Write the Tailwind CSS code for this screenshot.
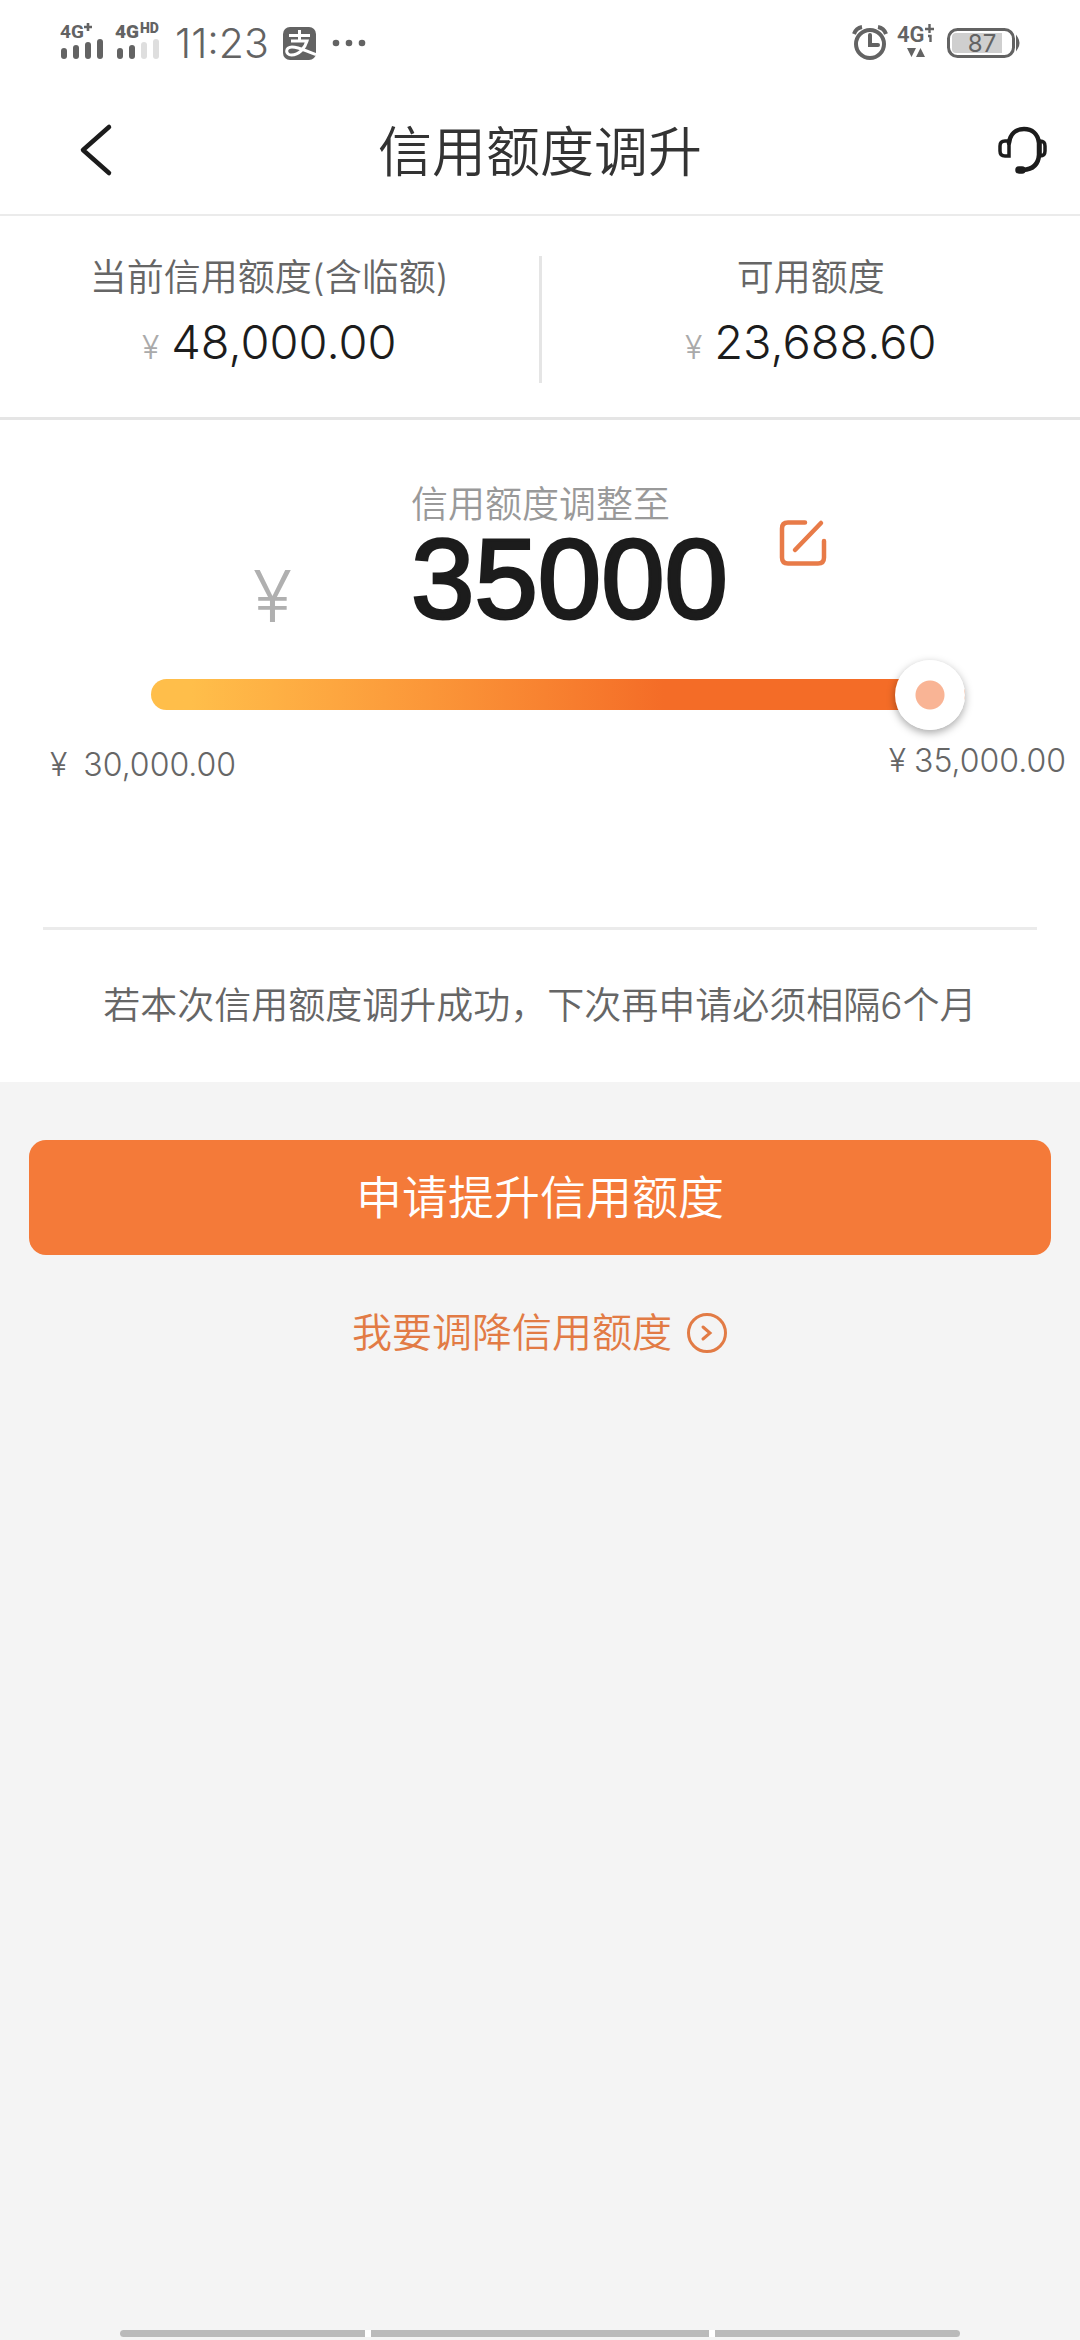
<!DOCTYPE html>
<html lang="zh-CN">
<head>
  <meta charset="UTF-8" />
  <meta name="viewport" content="width=device-width, initial-scale=1.0"/>
  <title>信用额度调升</title>
  <script src="https://cdn.jsdelivr.net/npm/@tailwindcss/browser@4"></script>
</head>
<body class="min-h-screen flex flex-col bg-[#f4f4f4] font-[Inter,'Noto_Sans_CJK_SC',sans-serif] font-[350] text-[#666]">

  <!-- Status bar -->
  <div class="h-[84px] bg-white flex items-center justify-between px-[60px] pt-[2px] text-[#636363]">
    <div class="flex items-center">
      <svg class="w-[44px] h-[48px]" viewBox="0 -5 44 48" fill="#636363" font-family="Roboto, sans-serif" font-weight="700">
        <text x="0" y="14" font-size="19">4G</text>
        <path d="M24 3h8M28 -1v8" stroke="#636363" stroke-width="2.6"/>
        <rect x="1" y="24" width="6" height="11" rx="3"/>
        <rect x="13" y="21" width="6" height="14" rx="3"/>
        <rect x="25" y="18" width="6" height="17" rx="3"/>
        <rect x="37" y="15" width="6" height="20" rx="3"/>
      </svg>
      <svg class="w-[48px] h-[48px] ml-[11px]" viewBox="0 -5 48 48" fill="#636363" font-family="Roboto, sans-serif" font-weight="900">
        <text x="0" y="14" font-size="19">4G</text>
        <text x="25" y="9" font-size="14">HD</text>
        <rect x="2" y="24" width="6" height="11" rx="3"/>
        <rect x="14" y="21" width="6" height="14" rx="3"/>
        <rect x="26" y="18" width="6" height="17" rx="3" fill="#dedede"/>
        <rect x="38" y="15" width="6" height="20" rx="3" fill="#dedede"/>
      </svg>
      <span class="ml-3 text-[41px] leading-[48px]">11:23</span>
      <svg class="w-[33px] h-[33px] ml-[14px]" viewBox="0 0 33 33">
        <rect width="33" height="33" rx="7" fill="#636363"/>
        <path d="M6 8.500h21M16.500 3v11M8 14h16C22 21 16 28 8.500 28C2 28 2 20 9 20C17 20 24 25 33 27.500" fill="none" stroke="#fff" stroke-width="3"/>
      </svg>
      <svg class="w-[34px] h-[8px] ml-4" viewBox="0 0 34 8" fill="#636363">
        <circle cx="4" cy="4" r="3.300"/><circle cx="17" cy="4" r="3.300"/><circle cx="30" cy="4" r="3.300"/>
      </svg>
    </div>
    <div class="flex items-center">
      <svg class="w-[36px] h-[36px]" viewBox="0 0 36 36" fill="none" stroke="#636363" stroke-width="4">
        <circle cx="18" cy="19" r="14"/>
        <path d="M18 10v10h8" stroke-linecap="round"/>
        <path d="M2 9Q4 3 10 2M34 9Q32 3 26 2"/>
      </svg>
      <svg class="w-[38px] h-[48px] ml-[9px]" viewBox="0 -4 38 48" fill="#636363" font-family="Roboto, sans-serif" font-weight="600">
        <text x="0" y="19" font-size="22">4G</text>
        <path d="M28 6h9M32.500 1v9M31 13h2.500v6" fill="none" stroke="#636363" stroke-width="2.400"/>
        <path d="M10 25h9l-4.500 9zM19 34h9l-4.500-9z"/>
      </svg>
      <svg class="w-[73px] h-[32px] ml-[12px]" viewBox="0 0 73 32" font-family="Inter, sans-serif">
        <rect x="1.500" y="2.500" width="65" height="27" rx="9" fill="none" stroke="#636363" stroke-width="3"/>
        <path d="M70 11q3 5 0 10z" fill="#636363" stroke="#636363" stroke-width="2"/>
        <path d="M9 6h46v20H9q-4 0-4-4V10q0-4 4-4z" fill="#cfcfcf"/>
        <text x="35" y="24.500" font-size="24" font-weight="400" fill="#636363" text-anchor="middle">87</text>
      </svg>
    </div>
  </div>

  <!-- Header -->
  <header class="h-[132px] bg-white border-b-2 border-[#ebebeb] grid grid-cols-[1fr_auto_1fr] items-center pl-[76px] pr-[30px] pt-[2px]">
    <button type="button" aria-label="返回" class="justify-self-start">
      <svg class="w-[40px] h-[54px]" viewBox="0 0 40 54" fill="none" stroke="#1c1c1c" stroke-width="4.500" stroke-linecap="round" stroke-linejoin="round">
        <path d="M33 4L7 27L33 50"/>
      </svg>
    </button>
    <h1 class="text-[54px] leading-[80px] text-[#333] pt-[6px] pr-[46px]">信用额度调升</h1>
    <button type="button" aria-label="客服" class="justify-self-end">
      <svg class="w-[54px] h-[50px]" viewBox="0 0 54 50" fill="none" stroke="#1c1c1c" stroke-width="4.500" stroke-linecap="round">
        <path d="M13 18C14 9 20 4 28 4S42 9 43 18V30Q42 44 27 45"/>
        <path d="M13 16v15H9q-5 0-5-5v-5q0-5 5-5z" stroke-width="3.500"/>
        <path d="M44 16q5 0 5 5v5q0 5-5 5z" stroke-width="3.500"/>
        <path d="M23 45h3" stroke-width="7.500"/>
      </svg>
    </button>
  </header>

  <!-- Current and available limit -->
  <section class="bg-white border-b-3 border-[#e5e5e5] pt-10 pb-[34px] flex">
    <div class="flex-1 border-r-3 border-[#e5e5e5] h-[127px] text-center">
      <p class="text-[37px] leading-[44px]">当前信用额度(含临额)</p>
      <p class="mt-[14px] text-[47px] leading-[56px] font-light text-[#1c1c1c] flex items-baseline justify-center gap-3"><span class="text-[32px] leading-[40px] text-[#aaa]">¥</span>48,000.00</p>
    </div>
    <div class="flex-1 text-center">
      <p class="text-[37px] leading-[44px]">可用额度</p>
      <p class="mt-[14px] text-[47px] leading-[56px] font-light text-[#1c1c1c] flex items-baseline justify-center gap-3"><span class="text-[32px] leading-[40px] text-[#aaa]">¥</span>23,688.60</p>
    </div>
  </section>

  <!-- Adjustment -->
  <section class="bg-white pt-[63px]">
    <div class="flex justify-center">
      <span class="w-[158px] pt-[73px] text-[72px] leading-[80px] font-light text-[#b0b0b0]">¥</span>
      <div>
        <label for="amount" class="block text-[37px] leading-[44px] text-[#999]">信用额度调整至</label>
        <input id="amount" type="text" inputmode="numeric" value="35000" class="block w-[340px] h-[102px] font-['Liberation_Sans'] text-[114px] leading-[102px] font-normal [-webkit-text-stroke:3px_#1c1c1c] text-[#1c1c1c] outline-none">
      </div>
      <button type="button" aria-label="编辑" class="self-start ml-7 mt-[36px]">
        <svg class="w-[48px] h-[48px]" viewBox="0 0 48 48" fill="none" stroke="#e87b48" stroke-width="4.500" stroke-linecap="round">
          <path d="M26 3.500H9q-6 0-6 6v29q0 6 6 6h30q6 0 6-6V22"/>
          <path d="M42 4L16 31"/>
        </svg>
      </button>
    </div>

    <div class="mt-[43px] ml-[14%] mr-[115px] flex">
      <input type="range" min="30000" max="35000" value="35000" aria-label="信用额度"
        class="appearance-none w-full h-[31px] rounded-full bg-linear-to-r from-[#ffbe4a] from-5% to-[#f46c27] to-63% [&::-webkit-slider-thumb]:appearance-none [&::-webkit-slider-thumb]:w-[70px] [&::-webkit-slider-thumb]:h-[70px] [&::-webkit-slider-thumb]:rounded-full [&::-webkit-slider-thumb]:bg-[radial-gradient(circle,#f9b495_14px,#fff_15px)] [&::-webkit-slider-thumb]:shadow-[0_3px_8px_rgba(0,0,0,0.35)]">
    </div>
    <div class="mt-[31px] pl-[50px] pr-[14px] flex justify-between text-[32px] leading-[40px] font-light">
      <span class="pt-1">¥<span class="ml-4">30,000.00</span></span>
      <span>¥<span class="ml-2">35,000.00</span></span>
    </div>

    <p class="mx-[43px] mt-[142px] border-t-3 border-[#ebebeb] pt-[51px] pb-[51px] text-[37px] leading-[50px] text-center">若本次信用额度调升成功，下次再申请必须相隔6个月</p>
  </section>

  <!-- Actions -->
  <main class="px-[29px] pt-[58px] text-center">
    <button type="button" class="w-full h-[115px] rounded-[17px] bg-[#f47a39] text-white text-[46px]">申请提升信用额度</button>
    <a href="#" class="mt-[52px] inline-flex items-center gap-[14px] text-[40px] leading-[52px] text-[#e27b45]">
      我要调降信用额度
      <svg class="w-[42px] h-[42px]" viewBox="0 0 42 42" fill="none" stroke="#e27b45" stroke-width="3" stroke-linecap="round">
        <circle cx="21" cy="21" r="18.500"/>
        <path d="M17 15l7 6l-7 6"/>
      </svg>
    </a>
  </main>

  <!-- Gesture bar -->
  <div class="mt-auto mb-[3px] mx-[120px] h-[7px] bg-white rounded-full overflow-hidden grid grid-cols-[245fr_338fr_245fr] gap-[6px]">
    <span class="bg-[#bababa]"></span>
    <span class="bg-[#bababa]"></span>
    <span class="bg-[#bababa]"></span>
  </div>
</body>
</html>
